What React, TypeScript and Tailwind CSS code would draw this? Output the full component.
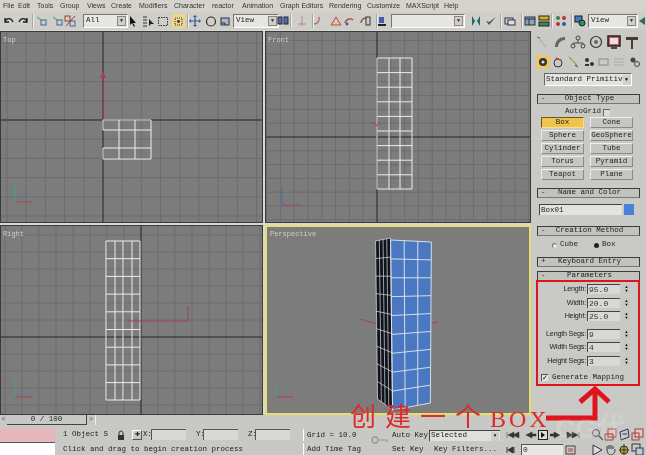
import type { ReactNode } from "react";

const menus: [string, number][] = [
  ["File", 15], ["Edit", 19], ["Tools", 23], ["Group", 27], ["Views", 24],
  ["Create", 28], ["Modifiers", 35], ["Character", 38], ["reactor", 30], ["Animation", 38],
  ["Graph Editors", 49], ["Rendering", 38], ["Customize", 39], ["MAXScript", 38], ["Help", 20],
];

const buttons = [["Box", "Cone"], ["Sphere", "GeoSphere"], ["Cylinder", "Tube"], ["Torus", "Pyramid"], ["Teapot", "Plane"]];

const lerp = (a: number, b: number, t: number) => a + (b - a) * t;

function Ic({ children, w = 14, className = "" }: { children: ReactNode; w?: number; className?: string }) {
  return (
    <svg width={w} height={14} viewBox={`0 0 ${w} 14`} className={`shrink-0 ${className}`} fill="none">
      {children}
    </svg>
  );
}

function Sep({ className = "" }: { className?: string }) {
  return <div className={`h-[14px] w-[2px] border-l border-r border-l-[#a8a6a0] border-r-[#eeeeea] shrink-0 ${className}`} />;
}

function Drop({ w, label, className = "" }: { w: string; label: string; className?: string }) {
  return (
    <div className={`${w} h-[14px] shrink-0 bg-[#e8e6e2] border border-t-[#77756f] border-l-[#77756f] border-r-white border-b-white flex items-center justify-between pl-[2px] font-['Liberation_Mono'] text-[7.5px] text-[#222] ${className}`}>
      <span>{label}</span>
      <span className="w-[9px] h-[10px] mr-[1px] bg-[#d0cec8] border border-[#8a8880] flex items-center justify-center text-[5px] leading-none">▼</span>
    </div>
  );
}

function Grid({ x, y, w, h, step, mx, my }: { x: number; y: number; w: number; h: number; step: number; mx: number; my: number }) {
  const idx = Array.from({ length: 61 }, (_, i) => i - 30);
  return (
    <g>
      {idx.map((i) => <line key={`x${i}`} x1={mx + i * step} x2={mx + i * step} y1={y} y2={y + h} stroke="#6c6c6c" strokeWidth="1" />)}
      {idx.map((i) => <line key={`y${i}`} x1={x} x2={x + w} y1={my + i * step} y2={my + i * step} stroke="#6c6c6c" strokeWidth="1" />)}
      <line x1={mx} x2={mx} y1={y} y2={y + h} stroke="#2c2c2c" strokeWidth="1" />
      <line x1={x} x2={x + w} y1={my} y2={my} stroke="#2c2c2c" strokeWidth="1" />
    </g>
  );
}

function Tripod({ x, y, up = "#4aa56a" }: { x: number; y: number; up?: string }) {
  return (
    <g strokeWidth="1">
      <line x1={x} y1={y} x2={x} y2={y - 18} stroke={up} />
      <line x1={x} y1={y} x2={x + 17} y2={y} stroke="#b8404a" />
      <line x1={x} y1={y} x2={x + 11} y2={y - 8} stroke="#5577aa" />
    </g>
  );
}

function Viewport({ x, y, w, h, label, active, children }: { x: number; y: number; w: number; h: number; label: string; active?: boolean; children: ReactNode }) {
  return (
    <div className={`relative bg-[#7c7c7c] overflow-hidden ${active ? "border-2 border-[#e6df6e]" : "outline outline-1 -outline-offset-1 outline-[#3a3a3a]"}`}>
      <svg viewBox={`${x} ${y} ${w} ${h}`} className="block w-full h-full" preserveAspectRatio="none">
        {children}
      </svg>
      <span className={`absolute left-[3px] font-['Liberation_Mono'] text-[7px] leading-[8px] text-[#cfcfcf] ${active ? "top-[3px]" : "top-[5px]"}`}>{label}</span>
    </div>
  );
}

function Rollup({ sign, label, className = "" }: { sign: string; label: string; className?: string }) {
  return (
    <div className={`mx-[6px] h-[10px] flex items-center bg-[#c2c2bf] border border-t-[#3c3c3c] border-l-[#3c3c3c] border-r-[#3c3c3c] border-b-[#777] font-['Liberation_Mono'] text-[7.5px] text-[#222] ${className}`}>
      <span className="w-[14px] pl-[3px]">{sign}</span>
      <span className="flex-1 text-center pr-[12px] whitespace-nowrap">{label}</span>
    </div>
  );
}

function PanelButton({ label, on }: { label: string; on?: boolean }) {
  return (
    <div className={`w-[43px] h-[11px] flex items-center justify-center font-['Liberation_Mono'] text-[7.5px] text-[#222] border ${on ? "bg-[#f0c44c] border-t-[#6a5a20] border-l-[#6a5a20] border-r-[#f8e090] border-b-[#f8e090]" : "bg-[#c6c6c3] border-t-[#eee] border-l-[#eee] border-r-[#8a8a86] border-b-[#8a8a86]"}`}>
      {label}
    </div>
  );
}

function Param({ label, value, className = "" }: { label: string; value: string; className?: string }) {
  return (
    <div className={`flex items-center h-[10px] ${className}`}>
      <span className="w-[55px] text-right font-['Liberation_Sans'] text-[7.2px] tracking-[-0.2px] text-[#222] whitespace-nowrap shrink-0">{label}</span>
      <div className="w-[33px] h-[10px] ml-[1px] bg-[#d8d8d5] border-t border-l border-[#444] font-['Liberation_Mono'] text-[8px] leading-[9px] text-[#333] pl-[1px]">{value}</div>
      <div className="w-[7px] h-[10px] ml-[3px] bg-[#c6c6c3] flex flex-col items-center justify-center text-[4px] leading-[4px] text-black">
        <span>▲</span>
        <span>▼</span>
      </div>
    </div>
  );
}

function Blue() {
  const rows = Array.from({ length: 10 }, (_, i) => i / 9);
  const pA = { tl: [390, 238], tr: [431, 240], bl: [392, 408], br: [430, 401] };
  const pB = { tl: [375, 239], tr: [390, 236], bl: [377, 397], br: [392, 408] };
  return (
    <g>
      <polygon points="375,239 390,236 392,408 377,397" fill="#0f1218" />
      <polygon points="390,238 431,240 430,401 392,408" fill="#4a78c0" />
      {rows.map((t) => (
        <line key={`a${t}`} x1={lerp(pA.tl[0], pA.bl[0], t)} y1={lerp(pA.tl[1], pA.bl[1], t)} x2={lerp(pA.tr[0], pA.br[0], t)} y2={lerp(pA.tr[1], pA.br[1], t)} stroke="#e4e8f0" strokeWidth="0.9" />
      ))}
      {[0, 1 / 3, 2 / 3, 1].map((t) => (
        <line key={`b${t}`} x1={lerp(pA.tl[0], pA.tr[0], t)} y1={lerp(pA.tl[1], pA.tr[1], t)} x2={lerp(pA.bl[0], pA.br[0], t)} y2={lerp(pA.bl[1], pA.br[1], t)} stroke="#e4e8f0" strokeWidth="0.9" />
      ))}
      {rows.map((t) => (
        <line key={`c${t}`} x1={lerp(pB.tl[0], pB.bl[0], t)} y1={lerp(pB.tl[1], pB.bl[1], t)} x2={lerp(pB.tr[0], pB.br[0], t)} y2={lerp(pB.tr[1], pB.br[1], t)} stroke="#dfe3ea" strokeWidth="0.7" />
      ))}
      {[0, 0.25, 0.5, 0.75, 1].map((t) => (
        <line key={`d${t}`} x1={lerp(pB.tl[0], pB.tr[0], t)} y1={lerp(pB.tl[1], pB.tr[1], t)} x2={lerp(pB.bl[0], pB.br[0], t)} y2={lerp(pB.bl[1], pB.br[1], t)} stroke="#dfe3ea" strokeWidth="0.7" />
      ))}
    </g>
  );
}

function Wire({ xs, ys }: { xs: number[]; ys: number[] }) {
  return (
    <g stroke="#ececec" strokeWidth="1">
      {xs.map((v) => <line key={`x${v}`} x1={v} x2={v} y1={ys[0]} y2={ys[ys.length - 1]} />)}
      {ys.map((v) => <line key={`y${v}`} x1={xs[0]} x2={xs[xs.length - 1]} y1={v} y2={v} />)}
    </g>
  );
}

export default function App() {
  return (
    <div className="relative w-[646px] h-[455px] overflow-hidden bg-[#c8c8c5] font-['Liberation_Sans'] blur-[0.45px]">
      {/* menu */}
      <div className="h-[12px] bg-[#d6d3cd] flex items-center pl-[3px] text-[7px] text-[#333]">
        {menus.map(([m, w]) => (
          <span key={m} style={{ width: w }} className="whitespace-nowrap shrink-0">{m}</span>
        ))}
      </div>

      {/* toolbar */}
      <div className="h-[18px] bg-[#d0cec8] flex items-center overflow-hidden">
        <Ic className="ml-[2px]"><path d="M3 8 C4 4 9 3 11 8 M3 4v4h4" stroke="#222" strokeWidth="1.4" /></Ic>
        <Ic><path d="M11 8 C10 4 5 3 3 8 M11 4v4H7" stroke="#222" strokeWidth="1.4" /></Ic>
        <Sep className="ml-[2px]" />
        <Ic className="ml-[1px]"><path d="M2 3l4 3" stroke="#3a8a50" /><rect x="6" y="6" width="5" height="5" stroke="#3866a8" /></Ic>
        <Ic className="ml-[2px]"><path d="M2 3l4 3" stroke="#3a8a50" /><rect x="6" y="6" width="5" height="5" stroke="#3866a8" /></Ic>
        <Ic className="-ml-[2px]"><rect x="2" y="2" width="5" height="5" stroke="#8a4a30" /><rect x="7" y="7" width="5" height="5" stroke="#3866a8" /><path d="M3 12L12 2" stroke="#b03030" /></Ic>
        <Drop w="w-[45px]" label="All" className="ml-[6px]" />
        <Ic className="-ml-[2px]"><path d="M4 2v9l2-2 2 4 1-1-2-3h3z" fill="#111" /></Ic>
        <Ic className="ml-[1px]"><path d="M2 3h4M2 6h4M2 9h4M2 12h4" stroke="#333" /><path d="M8 5v7l2-2h3z" fill="#222" /></Ic>
        <Ic className="ml-[1px]"><rect x="2.5" y="3.5" width="9" height="8" stroke="#333" strokeDasharray="1.5 1" /></Ic>
        <div className="ml-[2px] w-[13px] h-[14px] bg-[#ecd68a] flex items-center justify-center shrink-0">
          <svg width="9" height="9"><rect x="1" y="1" width="7" height="7" fill="none" stroke="#333" strokeDasharray="1 1" /><circle cx="4.5" cy="4.5" r="1.4" fill="#333" /></svg>
        </div>
        <Sep className="ml-[2px]" />
        <Ic className="-ml-[1px]"><path d="M7 2v10M2 7h10" stroke="#2a5a9a" strokeWidth="1.2" /><path d="M7 1l-2 2h4zM7 13l-2-2h4zM1 7l2-2v4zM13 7l-2-2v4z" fill="#2a5a9a" /></Ic>
        <Ic className="ml-[2px]"><circle cx="7" cy="7.5" r="4.5" stroke="#2b2b2b" strokeWidth="1.2" /></Ic>
        <Ic><rect x="3" y="4" width="8" height="7" fill="#aab8c8" stroke="#234" /><path d="M3 9h4v2" stroke="#234" /></Ic>
        <Drop w="w-[46px]" label="View" className="ml-[1px]" />
        <Ic className="-ml-[3px]"><rect x="2" y="3" width="4" height="7" fill="#5a6ab0" stroke="#223" /><rect x="8" y="3" width="4" height="7" fill="#5a6ab0" stroke="#223" /></Ic>
        <Sep />
        <Ic className="ml-[3px]"><path d="M7 2v10M3 10h8" stroke="#b08a88" /></Ic>
        <Sep className="ml-[3px]" />
        <Ic className="-ml-[4px]"><path d="M4 10c3 0 6-3 5-7" stroke="#b07070" strokeWidth="1.4" /></Ic>
        <Ic className="ml-[5px]"><path d="M2 11l5-8 5 8z" stroke="#b05050" fill="#d8c8a8" /></Ic>
        <Ic className="-ml-[1px]"><path d="M3 9a5 5 0 0 1 8-3" stroke="#a04848" strokeWidth="1.4" /><circle cx="5" cy="10" r="1.4" fill="#556" /></Ic>
        <Ic className="ml-[2px]"><path d="M3 9a5 5 0 0 1 5-5" stroke="#a04848" strokeWidth="1.4" /><rect x="8" y="3" width="4" height="8" stroke="#333" /></Ic>
        <Sep className="ml-[4px]" />
        <Ic className="-ml-[3px]"><rect x="4" y="3" width="5" height="6" fill="#4a5ab0" /><path d="M3 11h8" stroke="#222" strokeWidth="2" /></Ic>
        <Drop w="w-[74px]" label="" className="ml-[2px]" />
        <Ic className="ml-[4px]"><path d="M3 2v10l3-5zM11 2v10L8 7z" fill="#1f6a68" /></Ic>
        <Ic className="ml-[1px]"><path d="M2 7l3 4 7-8-7 5z" fill="#3a6a5a" /></Ic>
        <Sep className="ml-[2px]" />
        <Ic className="ml-[1px]"><rect x="2" y="4" width="8" height="6" stroke="#334" /><rect x="5" y="6" width="7" height="5" fill="#dde" stroke="#334" /></Ic>
        <Sep className="ml-[4px]" />
        <Ic><rect x="2" y="3" width="10" height="8" fill="#8ea0b8" stroke="#234" /><path d="M2 5h10M6 5v6" stroke="#234" /></Ic>
        <Ic><rect x="2" y="2" width="10" height="4" fill="#d8b020" stroke="#222" /><rect x="2" y="8" width="10" height="4" fill="#3a8a50" stroke="#222" /></Ic>
        <Sep />
        <Ic className="ml-[1px]"><circle cx="4" cy="4" r="2" fill="#2a8a50" /><circle cx="10" cy="4" r="2" fill="#c03030" /><circle cx="4" cy="10" r="2" fill="#c03030" /><circle cx="10" cy="10" r="2" fill="#2a5ab0" /></Ic>
        <Sep className="ml-[3px]" />
        <Ic><rect x="2" y="2" width="7" height="6" fill="#4a7ab8" stroke="#123" /><circle cx="9" cy="9" r="3" fill="#3a8a5a" stroke="#123" /></Ic>
        <Drop w="w-[50px]" label="View" className="ml-[1px]" />
        <Ic className="-ml-[2px]"><path d="M3 7l6-4v8z" fill="#2a6a5a" /></Ic>
      </div>

      {/* viewports + command panel */}
      <div className="flex h-[395px]">
        <div className="w-[531px] flex flex-col shrink-0">
          <div className="h-[384px] grid grid-cols-[263px_266px] grid-rows-[192px_190px] gap-[2px] bg-[#d8d8d5] pt-px">
            <Viewport x={0} y={31} w={263} h={192} label="Top">
              <Grid x={0} y={31} w={263} h={192} step={19.2} mx={103} my={120} />
              <line x1="103" y1="120" x2="103" y2="76" stroke="#a84050" strokeWidth="1" />
              <path d="M103 71l-3 7h6z" fill="#a84050" />
              <path d="M103 120H151V159H103V148M103 130H151M103 148H151M119 120V159M135 120V159M103 130V120" stroke="#efefef" strokeWidth="1" fill="none" />
              <Tripod x={15} y={202} />
            </Viewport>
            <Viewport x={265} y={31} w={266} h={192} label="Front">
              <Grid x={265} y={31} w={266} h={192} step={13.8} mx={377} my={137} />
              <Wire xs={[377, 389, 400, 412]} ys={[58, 72.6, 87.2, 101.8, 116.4, 131, 145.6, 160.2, 174.8, 189]} />
              <path d="M372 122l5 4 2-4" stroke="#a84050" fill="none" />
              <Tripod x={282} y={205} up="#4a68a8" />
            </Viewport>
            <Viewport x={0} y={224} w={263} h={190} label="Right">
              <Grid x={0} y={224} w={263} h={190} step={17} mx={141} my={336} />
              <Wire xs={[106, 115, 123, 132, 140]} ys={[240, 257.7, 275.4, 293.1, 310.8, 328.5, 346.2, 363.9, 381.6, 399]} />
              <path d="M128 320H188V305" stroke="#a84050" fill="none" />
              <Tripod x={15} y={396} />
            </Viewport>
            <Viewport x={266} y={225} w={263} h={186} label="Perspective" active>
              <path d="M359 317L383 324M420 324L437 320" stroke="#a84050" fill="none" />
              <Blue />
              <Tripod x={276} y={395} />
            </Viewport>
          </div>
          <div className="h-[11px] flex items-stretch bg-[#c8c8c5]">
            <div className="w-[7px] text-[7px] leading-[10px] text-[#555] text-center">&lt;</div>
            <div className="w-[80px] bg-[#c8c8c5] border-r border-b border-[#444] font-['Liberation_Mono'] text-[7.5px] leading-[10px] text-center text-[#222]">0 / 100</div>
            <div className="w-[9px] text-[7px] leading-[10px] text-[#555] text-center border-r border-[#eee]">&gt;</div>
          </div>
        </div>

        {/* command panel */}
        <div className="flex-1 bg-[#c9c9c6] flex flex-col pt-[3px]">
          <div className="h-[17px] flex items-center justify-between pl-[3px] pr-[6px]">
            <Ic w={16}><path d="M4 2l8 10" stroke="#b8b8b8" strokeWidth="2" /><path d="M3 2l3 1" stroke="#40804f" /></Ic>
            <Ic w={16}><path d="M3 12c0-6 4-10 10-10v3c-4 0-7 3-7 7z" fill="#666" /></Ic>
            <Ic w={16}><circle cx="8" cy="3" r="2" stroke="#444" /><circle cx="3" cy="11" r="2" stroke="#444" /><circle cx="13" cy="11" r="2" stroke="#444" /><path d="M8 5v3M3 9V8h10v1" stroke="#444" /></Ic>
            <Ic w={16}><circle cx="8" cy="7" r="5.5" stroke="#333" strokeWidth="1.2" /><circle cx="8" cy="7" r="2" fill="#666" /></Ic>
            <Ic w={16}><rect x="2" y="1" width="12" height="10" fill="#cc5a5a" stroke="#222" strokeWidth="1.5" /><rect x="4" y="3" width="8" height="6" fill="#e8dede" /><path d="M5 13h6" stroke="#222" strokeWidth="1.5" /></Ic>
            <Ic w={16}><path d="M2 2h12v3H9v9H7V5H2z" fill="#4a3a30" /></Ic>
          </div>
          <div className="h-[15px] mt-[4px] flex items-center pl-[5px] gap-[1.3px]">
            <div className="w-[14px] h-[14px] bg-[#ecc86a] flex items-center justify-center shrink-0">
              <svg width="10" height="10"><circle cx="5" cy="5" r="4" fill="#333" /><circle cx="5" cy="5" r="1.6" fill="#ddd" /></svg>
            </div>
            <Ic><circle cx="7" cy="8" r="4" stroke="#333" /><path d="M5 3l4 2" stroke="#b05030" strokeWidth="1.5" /></Ic>
            <Ic><path d="M2 2l8 8" stroke="#b0a040" strokeWidth="1.5" /><path d="M8 10l3 2" stroke="#333" /></Ic>
            <Ic><circle cx="5" cy="5" r="2" fill="#333" /><circle cx="10" cy="9" r="2" fill="#333" /><path d="M3 10h4" stroke="#333" strokeWidth="2" /></Ic>
            <Ic><rect x="2" y="4" width="9" height="6" stroke="#889" /></Ic>
            <Ic><path d="M2 4h10M2 7h10M2 10h10" stroke="#aaa" /></Ic>
            <Ic><circle cx="5" cy="5" r="2.5" fill="#444" /><circle cx="9" cy="9" r="2.5" stroke="#444" /></Ic>
          </div>
          <div className="mt-[4px] ml-[13px] w-[88px] h-[13px] bg-[#e2e2df] border border-t-[#666] border-l-[#666] border-r-white border-b-white flex items-center justify-between pl-[1px] font-['Liberation_Mono'] text-[7.5px] text-[#222] whitespace-nowrap">
            <span>Standard Primitiv</span>
            <span className="w-[8px] h-[10px] mr-[1px] bg-[#d0d0cd] text-[5px] leading-[10px] text-center text-black shrink-0">▼</span>
          </div>

          <Rollup sign="-" label="Object Type" className="mt-[8px]" />
          <div className="h-[10px] mt-[3px] flex items-center justify-center gap-[2px] font-['Liberation_Mono'] text-[7.5px] text-[#222] pr-[2px]">
            AutoGrid
            <span className="w-[7px] h-[7px] bg-[#dcdcd9] border-t border-l border-[#666]" />
          </div>
          <div className="pl-[10px] flex flex-col gap-[2px]">
            {buttons.map(([a, b]) => (
              <div key={a} className="flex gap-[6px]">
                <PanelButton label={a} on={a === "Box"} />
                <PanelButton label={b} />
              </div>
            ))}
          </div>

          <Rollup sign="-" label="Name and Color" className="mt-[8px]" />
          <div className="mt-[6px] pl-[8px] flex items-center gap-[2px]">
            <div className="w-[83px] h-[11px] bg-[#e2e2df] border-t border-l border-[#444] font-['Liberation_Mono'] text-[7.5px] leading-[10px] text-[#222] pl-[1px]">Box01</div>
            <div className="w-[10px] h-[11px] bg-[#4a80d8]" />
          </div>

          <Rollup sign="-" label="Creation Method" className="mt-[11px]" />
          <div className="h-[12px] mt-[3px] flex items-center pl-[21px] font-['Liberation_Mono'] text-[7.5px] text-[#222]">
            <span className="w-[5px] h-[5px] rounded-full bg-[#e8e8e5] border-l border-t border-[#777]" />
            <span className="ml-[3px] w-[30px]">Cube</span>
            <span className="ml-[4px] w-[5px] h-[5px] rounded-full bg-[#222]" />
            <span className="ml-[3px]">Box</span>
          </div>

          <Rollup sign="+" label="Keyboard Entry" className="mt-[6px]" />
          <Rollup sign="-" label="Parameters" className="mt-[4px]" />

          <div className="mt-[3px] flex flex-col">
            <Param label="Length:" value="95.0" />
            <Param label="Width:" value="20.0" className="mt-[4px]" />
            <Param label="Height:" value="25.0" className="mt-[3px]" />
            <Param label="Length Segs:" value="9" className="mt-[8px]" />
            <Param label="Width Segs:" value="4" className="mt-[3px]" />
            <Param label="Height Segs:" value="3" className="mt-[4px]" />
          </div>
          <div className="mt-[6px] pl-[10px] flex items-center font-['Liberation_Mono'] text-[7.5px] text-[#222] whitespace-nowrap">
            <span className="w-[7px] h-[7px] bg-[#e4e4e1] border-t border-l border-[#555] text-[7px] leading-[6px] text-black">✓</span>
            <span className="ml-[4px]">Generate Mapping</span>
          </div>
        </div>
      </div>

      {/* status area */}
      <div className="h-[30px] flex bg-[#c8c8c5]">
        <div className="w-[55px] flex flex-col pt-[3px] shrink-0">
          <div className="h-[14px] bg-[#e6b8bc]" />
          <div className="flex-1 bg-white border-t border-[#555]" />
        </div>
        <div className="w-[243px] ml-[5px] flex flex-col pt-[3px] shrink-0 font-['Liberation_Mono'] text-[7.5px] text-[#222]">
          <div className="h-[13px] flex items-center">
            <span className="w-[55px] pl-[3px] whitespace-nowrap">1 Object S</span>
            <svg width="10" height="10" className="ml-[1px] shrink-0"><rect x="2" y="5" width="6" height="5" fill="#333" /><path d="M3 5V3a2 2 0 0 1 4 0v2" stroke="#333" fill="none" /></svg>
            <div className="ml-[6px] w-[10px] h-[10px] border border-t-white border-l-white border-r-[#555] border-b-[#555] flex items-center justify-center text-[6px] leading-none">✚</div>
            <span className="ml-[1px] w-[8px] text-right">X:</span>
            <div className="w-[35px] h-[11px] bg-[#d8d8d5] border-t border-l border-[#555]" />
            <span className="ml-[10px] w-[7px] text-right">Y:</span>
            <div className="w-[35px] h-[11px] bg-[#d8d8d5] border-t border-l border-[#555]" />
            <span className="ml-[10px] w-[7px] text-right">Z:</span>
            <div className="w-[35px] h-[11px] bg-[#d8d8d5] border-t border-l border-[#555]" />
          </div>
          <div className="mt-[2px] pl-[3px] whitespace-nowrap leading-[12px]">Click and drag to begin creation process</div>
        </div>
        <div className="w-[63px] flex flex-col pt-[4px] shrink-0 font-['Liberation_Mono'] text-[7.5px] text-[#222] whitespace-nowrap">
          <div className="h-[12px] pl-[3px] border-l border-white leading-[12px]">Grid = 10.0</div>
          <div className="h-[12px] mt-[2px] pl-[3px] border-l border-white leading-[12px]">Add Time Tag</div>
        </div>
        <div className="w-[26px] flex items-center justify-center shrink-0">
          <svg width="17" height="8"><circle cx="4" cy="4" r="3" fill="none" stroke="#999" strokeWidth="1.4" /><path d="M7 4h9v2" fill="none" stroke="#999" strokeWidth="1.2" /></svg>
        </div>
        <div className="w-[37px] flex flex-col pt-[5px] shrink-0 font-['Liberation_Mono'] text-[7.5px] text-[#222] whitespace-nowrap">
          <div className="h-[11px] leading-[11px]">Auto Key</div>
          <div className="h-[11px] mt-[3px] leading-[11px]">Set Key</div>
        </div>
        <div className="w-[71px] flex flex-col pt-[5px] shrink-0 font-['Liberation_Mono'] text-[7.5px] text-[#222] whitespace-nowrap">
          <div className="h-[11px] bg-[#e0e0dd] border-t border-l border-[#444] flex items-center justify-between pl-[1px]">
            Selected
            <span className="w-[8px] h-[9px] bg-[#cfcfcc] text-[5px] leading-[9px] text-center mr-px">▼</span>
          </div>
          <div className="h-[11px] mt-[3px] pl-[5px] leading-[11px]">Key Filters...</div>
        </div>
        <div className="w-[82px] ml-[6px] flex flex-col pt-[4px] shrink-0">
          <div className="h-[12px] flex items-center">
            <svg width="14" height="10"><path d="M1 2v6M8 2L2 5l6 3zM13 2L7 5l6 3z" fill="#333" stroke="#333" strokeWidth="0.5" /></svg>
            <svg width="14" height="10" className="ml-[3px]"><path d="M9 2L3 5l6 3zM9 4h4v2H9z" fill="#333" stroke="#333" strokeWidth="0.5" /></svg>
            <div className="ml-[1px] w-[10px] h-[10px] border border-[#222] bg-[#ddd] flex items-center justify-center shrink-0">
              <svg width="6" height="6"><path d="M1 0l4 3-4 3z" fill="#111" /></svg>
            </div>
            <svg width="14" height="10" className="ml-[2px]"><path d="M4 2l6 3-6 3zM0 4h4v2H0z" fill="#333" stroke="#333" strokeWidth="0.5" /></svg>
            <svg width="14" height="10" className="ml-[2px]"><path d="M1 2l6 3-6 3zM6 2l6 3-6 3zM13 2v6" fill="#333" stroke="#333" strokeWidth="0.5" /></svg>
          </div>
          <div className="h-[11px] mt-[3px] flex items-center">
            <svg width="13" height="8"><path d="M1 1v6M7 1L2 4l5 3zM8 1v6" fill="#333" stroke="#333" /></svg>
            <div className="ml-[2px] w-[42px] h-[11px] bg-[#e6e6e3] border-t border-l border-[#555] font-['Liberation_Mono'] text-[8px] leading-[10px] pl-[1px] text-[#333]">0</div>
            <svg width="12" height="10" className="ml-[2px]"><rect x="1" y="1" width="9" height="8" fill="none" stroke="#444" /><path d="M3 4h5M3 6h5" stroke="#a44" /></svg>
          </div>
        </div>
        <div className="flex-1 grid grid-cols-4 pt-[3px] pl-[3px] pr-[2px] gap-y-[2px]">
          <svg width="13" height="13"><circle cx="5" cy="5" r="3.5" fill="none" stroke="#555" /><path d="M8 8l4 4" stroke="#555" strokeWidth="1.4" /></svg>
          <svg width="13" height="13"><rect x="4" y="1" width="8" height="8" fill="#e0c8c0" stroke="#b05050" /><path d="M1 6h8v6H1z" fill="none" stroke="#a04040" /></svg>
          <svg width="13" height="13"><path d="M2 4l8-3 1 8-8 3z" fill="none" stroke="#335" /><path d="M4 6h5" stroke="#335" /></svg>
          <svg width="13" height="13"><rect x="4" y="1" width="8" height="8" fill="#e0c8c0" stroke="#a04040" /><rect x="1" y="5" width="7" height="7" fill="none" stroke="#a04040" /></svg>
          <svg width="13" height="13"><path d="M2 2l9 5-9 5z" fill="#ddd" stroke="#334" /></svg>
          <svg width="13" height="13"><path d="M3 6V3M5 6V2M7 6V2M9 6V3M3 6c0 4 2 6 4 6s4-2 4-6" fill="none" stroke="#333" /></svg>
          <svg width="13" height="13"><circle cx="6" cy="7" r="4" fill="#c8a028" stroke="#333" /><path d="M6 1v11M1 7h10" stroke="#333" /></svg>
          <svg width="13" height="13"><rect x="1" y="1" width="8" height="7" fill="none" stroke="#334" /><rect x="5" y="5" width="7" height="7" fill="#bcd" stroke="#334" /></svg>
        </div>
      </div>

      {/* annotations over the screenshot */}
      <div className="absolute left-[536px] top-[280px] w-[104px] h-[106px] border-[2px] border-[#e0141c]" />
      <div className="absolute left-[350px] top-[403px] font-['Liberation_Serif','Noto_Sans_CJK_SC',serif] text-[26px] leading-[30px] tracking-[9px] text-[#dd2a2a] whitespace-nowrap">创建一个</div>
      <div className="absolute left-[490px] top-[404px] font-['Liberation_Serif',serif] text-[24px] leading-[30px] tracking-[3px] text-[#dd2a2a] whitespace-nowrap">BOX</div>
      <svg width="70" height="40" viewBox="0 0 70 40" className="absolute left-[545px] top-[386px]">
        <path d="M1 32H50V6" fill="none" stroke="#e0141c" strokeWidth="5" />
        <path d="M35 16L50 3L64 16" fill="none" stroke="#e0141c" strokeWidth="5" />
      </svg>
      <div className="absolute left-[555px] top-[408px] font-['Liberation_Sans','Noto_Sans_CJK_SC',sans-serif] text-[28px] font-bold text-white/15 whitespace-nowrap">CG代</div>
    </div>
  );
}
